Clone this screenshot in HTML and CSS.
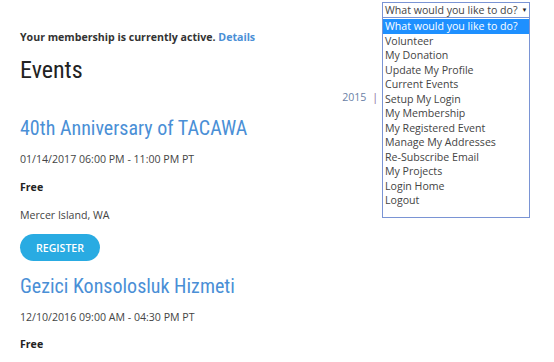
FILE: index.html
```html
<!DOCTYPE html>
<html>
<head>
<meta charset="utf-8">
<link rel="stylesheet" href="styles.css">
</head>
<body>
<div class="page">
  <p class="status">Your membership is currently active. <a href="#">Details</a></p>
  <h1 class="title">Events</h1>
  <div class="years"><a href="#">2015</a> <span class="sep">|</span></div>
  <div class="event">
    <h2 class="event-name">40th Anniversary of TACAWA</h2>
    <p class="date">01/14/2017 06:00 PM - 11:00 PM PT</p>
    <p class="price">Free</p>
    <p class="place">Mercer Island, WA</p>
    <button class="register">REGISTER</button>
  </div>
  <div class="event">
    <h2 class="event-name">Gezici Konsolosluk Hizmeti</h2>
    <p class="date">12/10/2016 09:00 AM - 04:30 PM PT</p>
    <p class="price">Free</p>
  </div>
</div>
<div class="picker">
  <div class="picker-box">What would you like to do? <span class="arrow">▼</span></div>
  <ul class="picker-list">
    <li class="active">What would you like to do?</li>
    <li>Volunteer</li>
    <li>My Donation</li>
    <li>Update My Profile</li>
    <li>Current Events</li>
    <li>Setup My Login</li>
    <li>My Membership</li>
    <li>My Registered Event</li>
    <li>Manage My Addresses</li>
    <li>Re-Subscribe Email</li>
    <li>My Projects</li>
    <li>Login Home</li>
    <li>Logout</li>
  </ul>
</div>
</body>
</html>
```
FILE: styles.css
```css
html, body {
  margin: 0;
  padding: 0;
  background: #fff;
}
body {
  font-family: "Open Sans", "Liberation Sans", sans-serif;
  color: #333;
  font-size: 10.6px;
}
.page {
  padding: 30px 20px 0 20px;
  display: flex;
  flex-direction: column;
}
.status {
  margin: 0;
  font-weight: 700;
  font-size: 10.6px;
  line-height: 14px;
  color: #333;
}
.status a {
  color: #4a8fd6;
  text-decoration: none;
}
.title {
  margin: 11px 0 0 0;
  font-family: "Roboto Condensed", "Roboto", sans-serif;
  font-stretch: condensed;
  font-weight: 400;
  font-size: 24px;
  line-height: 30px;
  color: #222;
}
.years {
  align-self: flex-end;
  margin: 5px 156px 0 0;
  font-size: 10.6px;
  line-height: 14px;
  color: #8a6d9e;
}
.years a {
  color: #6a7fa6;
  text-decoration: none;
}
.sep {
  margin-left: 3px;
}
.event {
  display: flex;
  flex-direction: column;
  align-items: flex-start;
}
.event-name {
  margin: 11px 0 0 0;
  font-family: "Roboto Condensed", "Roboto", sans-serif;
  font-stretch: condensed;
  font-weight: 400;
  font-size: 20px;
  line-height: 26px;
  color: #4a8fd6;
}
.date {
  margin: 11px 0 0 0;
  font-size: 10.6px;
  line-height: 15px;
  color: #444;
}
.price {
  margin: 13px 0 0 0;
  font-weight: 700;
  font-size: 10.6px;
  line-height: 15px;
  color: #222;
}
.place {
  margin: 13px 0 0 0;
  font-size: 10.6px;
  line-height: 15px;
  color: #444;
}
.register {
  margin: 11px 0 0 0;
  width: 80px;
  height: 27px;
  border: none;
  border-radius: 14px;
  background: #29abe2;
  color: #fff;
  font-family: "Open Sans", sans-serif;
  font-size: 10.6px;
  font-weight: 600;
  padding: 0;
}
.event + .event .event-name {
  margin-top: 12px;
}
.event + .event .price {
  margin-top: 12px;
}
.picker {
  position: absolute;
  left: 382px;
  top: 2px;
  width: 148px;
  font-family: "Open Sans", sans-serif;
  font-size: 10.6px;
  color: #444;
}
.picker-box {
  width: 144px;
  height: 14px;
  border: 1px solid #7a94d4;
  line-height: 14px;
  padding-left: 2px;
  display: flex;
  align-items: center;
  white-space: nowrap;
  background: #fff;
}
.arrow {
  font-size: 6px;
  margin-left: 4px;
  color: #222;
}
.picker-list {
  list-style: none;
  margin: 0;
  padding: 1px 0 10px 0;
  border: 1px solid #7a94d4;
  border-top: none;
  background: #fff;
}
.picker-list li {
  line-height: 14.45px;
  padding-left: 2px;
  white-space: nowrap;
}
.picker-list li.active {
  background: #1e90ff;
  color: #fff;
  line-height: 15px;
}
```
